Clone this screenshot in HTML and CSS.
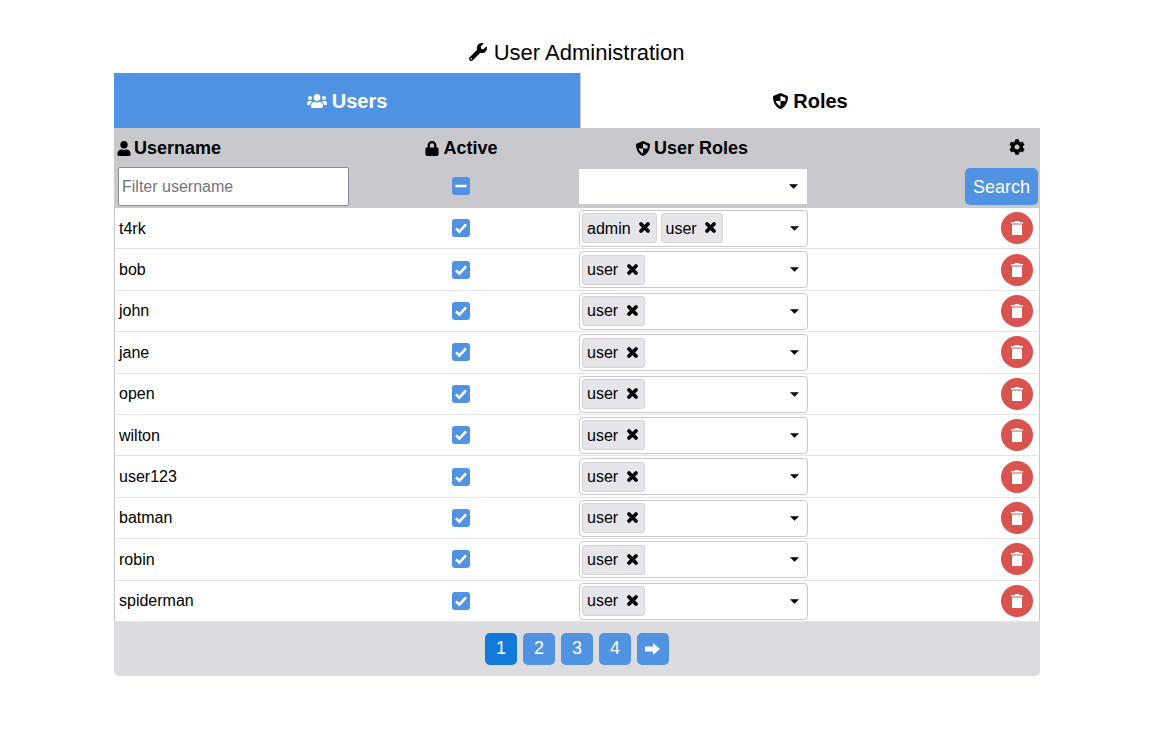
FILE: index.html
```html
<!DOCTYPE html>
<html lang="en">
<head>
    <meta charset="UTF-8">
    <title>User Administration</title>
    <link rel="stylesheet" href="styles.css">
</head>
<body>
    <svg class="sprites" width="0" height="0">
        <symbol id="i-wrench" viewBox="0 0 512 512"><path d="M507.7 109.1c-2.2-9-13.5-12.1-20.1-5.500l-74.400 74.400-67.900-11.300-11.300-67.900 74.400-74.400c6.600-6.600 3.400-17.900-5.700-20.200-47.400-11.700-99.500.9-136.600 37.900-39.600 39.600-50.500 97.100-34 147.200L18.700 402.800c-25 25-25 65.500 0 90.500s65.500 25 90.500 0l213.200-213.200c50.100 16.700 107.500 5.700 147.400-34.200 37.100-37.100 49.700-89.300 37.900-136.800zM64 472c-13.200 0-24-10.800-24-24 0-13.300 10.800-24 24-24s24 10.700 24 24c0 13.200-10.800 24-24 24z"/></symbol>
        <symbol id="i-users" viewBox="0 0 640 512"><path d="M96 224c35.300 0 64-28.700 64-64s-28.700-64-64-64-64 28.700-64 64 28.700 64 64 64zm448 0c35.300 0 64-28.700 64-64s-28.700-64-64-64-64 28.700-64 64 28.700 64 64 64zm32 32h-64c-17.600 0-33.500 7.100-45.100 18.600 40.300 22.100 68.900 62 75.100 109.400h66c17.700 0 32-14.300 32-32v-32c0-35.300-28.700-64-64-64zm-256 0c61.900 0 112-50.100 112-112S381.900 32 320 32 208 82.100 208 144s50.100 112 112 112zm76.800 32h-8.300c-20.800 10-43.900 16-68.500 16s-47.600-6-68.500-16h-8.300C179.600 288 128 339.600 128 403.200V432c0 26.500 21.500 48 48 48h288c26.500 0 48-21.500 48-48v-28.800c0-63.600-51.600-115.200-115.200-115.200zm-223.700-13.400C161.500 263.100 145.600 256 128 256H64c-35.300 0-64 28.700-64 64v32c0 17.700 14.300 32 32 32h65.900c6.300-47.400 34.900-87.300 75.200-109.400z"/></symbol>
        <symbol id="i-shield" viewBox="16 0 480 512"><path fill-rule="evenodd" d="M256 0c6 0 12 1 18 4l192 80c18 7 30 25 30 44 0 221-136 344-222 380-11 5-25 5-36 0C131 464 16 327 16 128c0-19 12-37 30-44L238 4c6-3 12-4 18-4zm0 85v171h154c3-30 4-70 4-105zm0 171H102c14 70 84 130 154 166z"/></symbol>
        <symbol id="i-user" viewBox="0 0 448 512"><path d="M224 256c70.700 0 128-57.300 128-128S294.700 0 224 0 96 57.300 96 128s57.300 128 128 128zm89.600 32h-16.700c-22.200 10.200-46.900 16-72.900 16s-50.600-5.800-72.900-16h-16.700C60.200 288 0 348.200 0 422.400V464c0 26.500 21.500 48 48 48h352c26.500 0 48-21.500 48-48v-41.600c0-74.200-60.200-134.400-134.400-134.400z"/></symbol>
        <symbol id="i-lock" viewBox="0 0 448 512"><path d="M400 224h-24v-72C376 68.200 307.800 0 224 0S72 68.200 72 152v72H48c-26.500 0-48 21.500-48 48v192c0 26.500 21.500 48 48 48h352c26.500 0 48-21.500 48-48V272c0-26.500-21.500-48-48-48zm-104 0H152v-72c0-39.700 32.300-72 72-72s72 32.300 72 72v72z"/></symbol>
        <symbol id="i-cog" viewBox="0 0 512 512"><path d="M487.400 315.700l-42.600-24.600c4.300-23.200 4.300-47 0-70.200l42.600-24.600c4.900-2.800 7.100-8.600 5.500-14-11.100-35.600-30-67.800-54.700-94.600-3.800-4.100-10-5.100-14.800-2.300L380.800 110c-17.900-15.400-38.500-27.300-60.800-35.100V25.800c0-5.600-3.900-10.500-9.400-11.700-36.700-8.200-74.300-7.800-109.200 0-5.500 1.200-9.400 6.100-9.400 11.700V75c-22.200 7.900-42.800 19.800-60.800 35.100L88.700 85.500c-4.900-2.800-11-1.900-14.800 2.300-24.700 26.700-43.600 58.900-54.700 94.600-1.700 5.400.6 11.200 5.500 14L67.300 221c-4.300 23.200-4.300 47 0 70.200l-42.600 24.600c-4.900 2.800-7.100 8.600-5.500 14 11.100 35.600 30 67.800 54.700 94.600 3.800 4.100 10 5.100 14.800 2.300l42.600-24.600c17.900 15.400 38.500 27.300 60.800 35.100v49.200c0 5.600 3.900 10.500 9.400 11.700 36.700 8.200 74.300 7.800 109.200 0 5.500-1.200 9.400-6.100 9.400-11.700v-49.200c22.200-7.900 42.800-19.800 60.800-35.100l42.600 24.600c4.900 2.800 11 1.900 14.800-2.300 24.700-26.700 43.600-58.900 54.700-94.600 1.500-5.500-.7-11.300-5.600-14.100zM256 336c-44.100 0-80-35.900-80-80s35.900-80 80-80 80 35.900 80 80-35.900 80-80 80z"/></symbol>
        <symbol id="i-trash" viewBox="0 0 12 14"><path d="M4 0h4l.5 1H12v1.500H0V1h3.500zM1 3.500h10V14H1z"/></symbol>
        <symbol id="i-times" viewBox="0 0 13 13"><path d="M3 3l7 7M10 3l-7 7" fill="none" stroke="#000" stroke-width="3.800" stroke-linecap="round"/></symbol>
        <symbol id="i-arrow" viewBox="0 0 15 12"><path d="M0 3.500h8V0l7 6-7 6V8.500H0z"/></symbol>
        <symbol id="i-caret" viewBox="0 0 10 5"><path d="M0 0h10L5 5z"/></symbol>
        <symbol id="i-check" viewBox="0 0 18 18"><rect width="18" height="18" rx="3" fill="#5093e3"/><path d="M4 9.300l3.400 3.400 6.600-7.400" fill="none" stroke="#fff" stroke-width="2.600"/></symbol>
        <symbol id="i-minus" viewBox="0 0 18 18"><rect width="18" height="18" rx="3" fill="#5093e3"/><path d="M3.500 9h11" fill="none" stroke="#fff" stroke-width="2.600"/></symbol>
    </svg>

    <main class="admin">
        <h1 class="title"><svg class="title-icon"><use href="#i-wrench"/></svg> User Administration</h1>

        <div class="tabs">
            <a class="tab tab-active" href="#"><svg class="tab-icon-wide"><use href="#i-users"/></svg> Users</a>
            <a class="tab" href="#"><svg class="tab-icon"><use href="#i-shield"/></svg> Roles</a>
        </div>

        <div class="table">
            <div class="row head">
                <div class="cell head-first"><svg class="head-icon"><use href="#i-user"/></svg> Username</div>
                <div class="cell center"><svg class="head-icon"><use href="#i-lock"/></svg> Active</div>
                <div class="cell center head-roles"><svg class="head-icon"><use href="#i-shield"/></svg> User Roles</div>
                <div class="cell end"><svg class="gear"><use href="#i-cog"/></svg></div>
            </div>
            <div class="row filters">
                <div class="cell"><input class="filter-input" type="text" placeholder="Filter username"></div>
                <div class="cell center"><svg class="check"><use href="#i-minus"/></svg></div>
                <div class="cell"><div class="select select-blank"><svg class="caret"><use href="#i-caret"/></svg></div></div>
                <div class="cell end"><button class="btn-search">Search</button></div>
            </div>

            <div class="row user">
                <div class="cell">t4rk</div>
                <div class="cell center"><svg class="check"><use href="#i-check"/></svg></div>
                <div class="cell"><div class="select">
                    <span class="chip">admin <svg class="x"><use href="#i-times"/></svg></span>
                    <span class="chip">user <svg class="x"><use href="#i-times"/></svg></span>
                    <svg class="caret"><use href="#i-caret"/></svg>
                </div></div>
                <div class="cell end"><button class="btn-delete"><svg class="trash"><use href="#i-trash"/></svg></button></div>
            </div>
            <div class="row user">
                <div class="cell">bob</div>
                <div class="cell center"><svg class="check"><use href="#i-check"/></svg></div>
                <div class="cell"><div class="select"><span class="chip">user <svg class="x"><use href="#i-times"/></svg></span><svg class="caret"><use href="#i-caret"/></svg></div></div>
                <div class="cell end"><button class="btn-delete"><svg class="trash"><use href="#i-trash"/></svg></button></div>
            </div>
            <div class="row user">
                <div class="cell">john</div>
                <div class="cell center"><svg class="check"><use href="#i-check"/></svg></div>
                <div class="cell"><div class="select"><span class="chip">user <svg class="x"><use href="#i-times"/></svg></span><svg class="caret"><use href="#i-caret"/></svg></div></div>
                <div class="cell end"><button class="btn-delete"><svg class="trash"><use href="#i-trash"/></svg></button></div>
            </div>
            <div class="row user">
                <div class="cell">jane</div>
                <div class="cell center"><svg class="check"><use href="#i-check"/></svg></div>
                <div class="cell"><div class="select"><span class="chip">user <svg class="x"><use href="#i-times"/></svg></span><svg class="caret"><use href="#i-caret"/></svg></div></div>
                <div class="cell end"><button class="btn-delete"><svg class="trash"><use href="#i-trash"/></svg></button></div>
            </div>
            <div class="row user">
                <div class="cell">open</div>
                <div class="cell center"><svg class="check"><use href="#i-check"/></svg></div>
                <div class="cell"><div class="select"><span class="chip">user <svg class="x"><use href="#i-times"/></svg></span><svg class="caret"><use href="#i-caret"/></svg></div></div>
                <div class="cell end"><button class="btn-delete"><svg class="trash"><use href="#i-trash"/></svg></button></div>
            </div>
            <div class="row user">
                <div class="cell">wilton</div>
                <div class="cell center"><svg class="check"><use href="#i-check"/></svg></div>
                <div class="cell"><div class="select"><span class="chip">user <svg class="x"><use href="#i-times"/></svg></span><svg class="caret"><use href="#i-caret"/></svg></div></div>
                <div class="cell end"><button class="btn-delete"><svg class="trash"><use href="#i-trash"/></svg></button></div>
            </div>
            <div class="row user">
                <div class="cell">user123</div>
                <div class="cell center"><svg class="check"><use href="#i-check"/></svg></div>
                <div class="cell"><div class="select"><span class="chip">user <svg class="x"><use href="#i-times"/></svg></span><svg class="caret"><use href="#i-caret"/></svg></div></div>
                <div class="cell end"><button class="btn-delete"><svg class="trash"><use href="#i-trash"/></svg></button></div>
            </div>
            <div class="row user">
                <div class="cell">batman</div>
                <div class="cell center"><svg class="check"><use href="#i-check"/></svg></div>
                <div class="cell"><div class="select"><span class="chip">user <svg class="x"><use href="#i-times"/></svg></span><svg class="caret"><use href="#i-caret"/></svg></div></div>
                <div class="cell end"><button class="btn-delete"><svg class="trash"><use href="#i-trash"/></svg></button></div>
            </div>
            <div class="row user">
                <div class="cell">robin</div>
                <div class="cell center"><svg class="check"><use href="#i-check"/></svg></div>
                <div class="cell"><div class="select"><span class="chip">user <svg class="x"><use href="#i-times"/></svg></span><svg class="caret"><use href="#i-caret"/></svg></div></div>
                <div class="cell end"><button class="btn-delete"><svg class="trash"><use href="#i-trash"/></svg></button></div>
            </div>
            <div class="row user">
                <div class="cell">spiderman</div>
                <div class="cell center"><svg class="check"><use href="#i-check"/></svg></div>
                <div class="cell"><div class="select"><span class="chip">user <svg class="x"><use href="#i-times"/></svg></span><svg class="caret"><use href="#i-caret"/></svg></div></div>
                <div class="cell end"><button class="btn-delete"><svg class="trash"><use href="#i-trash"/></svg></button></div>
            </div>

            <div class="pager">
                <a class="page page-current" href="#">1</a>
                <a class="page" href="#">2</a>
                <a class="page" href="#">3</a>
                <a class="page" href="#">4</a>
                <a class="page" href="#"><svg class="arrow"><use href="#i-arrow"/></svg></a>
            </div>
        </div>
    </main>
</body>
</html>
```

FILE: styles.css
```css
body {
    font-family: "Liberation Sans", Arial, sans-serif;
    margin: 0;
    padding: 0;
    background-color: #fff;
    color: #000;
}

.sprites {
    display: block;
    height: 0;
}

.admin {
    width: 926px;
    margin: 0 auto 0 114px;
    padding-top: 40px;
}

.title {
    margin: 0;
    font-size: 22px;
    font-weight: normal;
    line-height: 25px;
    height: 33px;
    text-align: center;
}

.title-icon {
    width: 18px;
    height: 18px;
    margin-left: -1px;
    margin-right: 1px;
    fill: currentColor;
    vertical-align: -1px;
}

.tabs {
    display: flex;
    height: 55px;
}

.tab {
    display: flex;
    flex: 1;
    align-items: center;
    justify-content: center;
    gap: 5px;
    box-sizing: border-box;
    padding-top: 2px;
    font-size: 20px;
    font-weight: bold;
    color: #000;
    text-decoration: none;
}

.tab-active {
    flex: none;
    width: 467px;
    background-color: #5093e3;
    color: #fff;
    border-right: 1px solid #c9c8cd;
}

.tab-icon {
    width: 15px;
    height: 18px;
    fill: currentColor;
    margin-top: -2px;
}

.tab-icon-wide {
    width: 20px;
    height: 16px;
    fill: currentColor;
    margin-top: -2px;
}

.table {
    border-radius: 0 0 5px 5px;
    overflow: hidden;
    font-size: 16px;
}

.row {
    display: grid;
    grid-template-columns: 234px 227px 238px 227px;
    align-items: center;
    background-color: #c9c8cd;
}

.cell {
    padding-left: 4px;
    box-sizing: border-box;
}

.center {
    display: flex;
    justify-content: center;
    align-items: center;
    gap: 4px;
    padding-left: 0;
}

.end {
    display: flex;
    justify-content: flex-end;
    padding: 0;
}

.head {
    height: 39px;
    font-size: 18px;
    font-weight: bold;
}

.head-first {
    display: flex;
    align-items: center;
    gap: 3px;
    padding-left: 3px;
}

.head-first,
.head .center {
    padding-top: 1px;
}

.head-roles {
    padding-right: 4px;
}

.head-icon {
    width: 14px;
    height: 15px;
    fill: currentColor;
}

.gear {
    width: 16px;
    height: 16px;
    margin-right: 15px;
    margin-bottom: 1px;
    fill: currentColor;
}

.filters {
    height: 41px;
    padding-bottom: 2px;
    box-sizing: border-box;
}

.filters .check {
    margin-bottom: 1px;
}

.filter-input {
    display: block;
    width: 231px;
    height: 39px;
    box-sizing: border-box;
    padding: 0 3px;
    border: 1px solid #8b8a90;
    border-radius: 2px;
    font-family: inherit;
    font-size: 16px;
    background: #fff;
}

.filter-input::placeholder {
    color: #757575;
}

.check {
    display: block;
    width: 18px;
    height: 18px;
    margin-right: 1px;
}

.user {
    height: 41.4px;
    padding-top: 0.6px;
    background-color: #fff;
    border-left: 1px solid #c9c8cd;
    border-right: 1px solid #c9c8cd;
    border-bottom: 1px solid #e4e4e6;
    box-sizing: border-box;
    grid-template-columns: 233px 227px 238px 226px;
}

.user .cell:first-child {
    padding-top: 0.4px;
}

.user .check {
    margin-bottom: 0.4px;
}

.select {
    display: flex;
    align-items: center;
    gap: 3.4px;
    width: 229px;
    height: 37px;
    box-sizing: border-box;
    padding: 0 2px;
    border: 1px solid #c9c8cd;
    border-radius: 4px;
    background: #fff;
    position: relative;
}

.select-blank {
    width: 228px;
    height: 35px;
    border-radius: 0;
    border-color: #fff;
}

.select-blank .caret {
    top: 14px;
}

.chip {
    display: flex;
    align-items: center;
    height: 30px;
    box-sizing: border-box;
    padding: 0.4px 5px 0 4px;
    border: 1px solid #d4d4d8;
    border-radius: 3px;
    background-color: #e5e5ea;
    gap: 7.6px;
}

.x {
    width: 13px;
    height: 13px;
    margin-bottom: 1.4px;
}

.caret {
    position: absolute;
    right: 8px;
    top: 15px;
    width: 9px;
    height: 5px;
    fill: #000;
}

.btn-search {
    width: 73px;
    height: 37px;
    margin-right: 2px;
    border: 0;
    border-radius: 5px;
    background-color: #5093e3;
    color: #fff;
    font-family: inherit;
    font-size: 18px;
    padding: 1px 0 0;
}

.btn-delete {
    display: flex;
    align-items: center;
    justify-content: center;
    width: 32px;
    height: 32px;
    margin-right: 6px;
    margin-bottom: 0.4px;
    padding: 0;
    border: 0;
    border-radius: 50%;
    background-color: #d9534f;
}

.trash {
    width: 12px;
    height: 14px;
    fill: #fff;
}

.pager {
    display: flex;
    justify-content: center;
    gap: 6px;
    padding: 11px 0;
    height: 54px;
    box-sizing: border-box;
    background-color: #dcdce0;
}

.page {
    display: flex;
    align-items: center;
    justify-content: center;
    width: 32px;
    height: 32px;
    border-radius: 5px;
    background-color: #5093e3;
    color: #fff;
    font-size: 18px;
    text-decoration: none;
}

.page-current {
    background-color: #1279db;
}

.arrow {
    width: 15px;
    height: 12px;
    margin-right: 1px;
    fill: #fff;
}
```
